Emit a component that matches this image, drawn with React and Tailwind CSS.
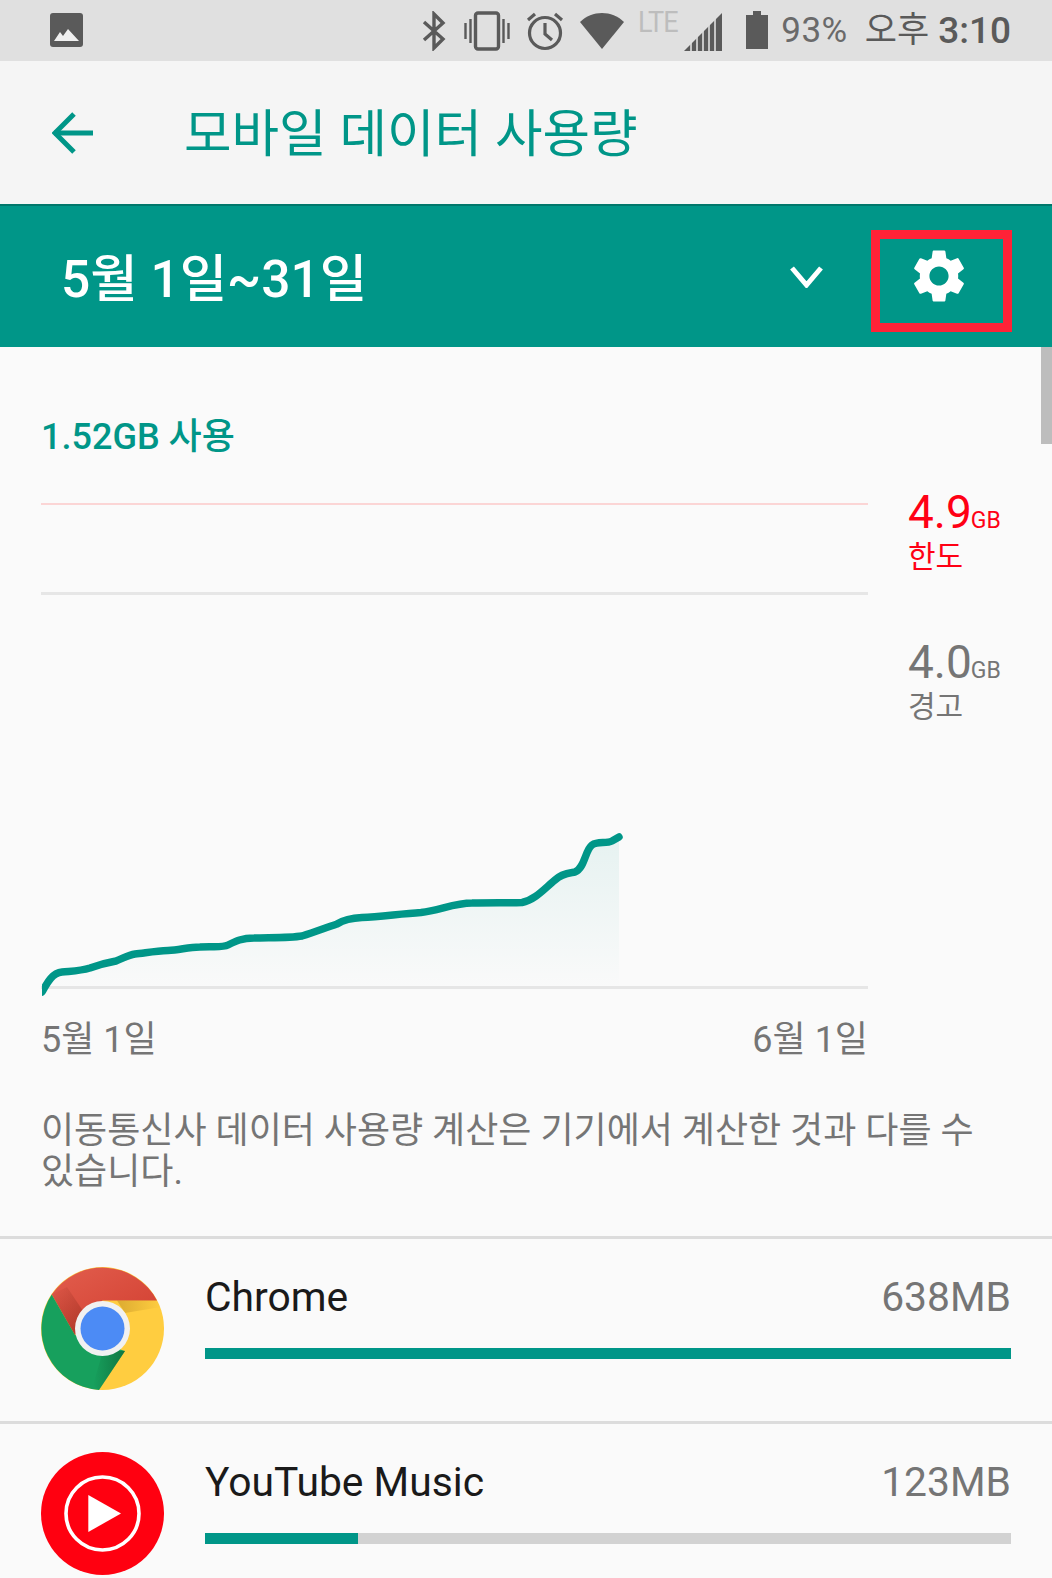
const FONT = "font-['Roboto','Noto_Sans_CJK_KR',sans-serif]";

function StatusIcons() {
  return (
    <div className="flex items-center h-full text-[#5f5f5f]">
      <svg className="w-[27px] h-[40px]" viewBox="0 0 27 40" fill="none" stroke="#5a5a5a" strokeWidth="3.4">
        <path d="M3 11 L22 28 L13 37 L13 3 L22 12 L3 29" />
      </svg>
      <svg className="w-[46px] h-[40px] ml-[16px]" viewBox="0 0 46 40" fill="none" stroke="#5a5a5a">
        <rect x="11.5" y="2" width="23" height="36" rx="2.5" strokeWidth="3.4" />
        <path d="M1.5 12v16M6.5 8v24M39.5 8v24M44.5 12v16" strokeWidth="2.4" />
      </svg>
      <svg className="w-[38px] h-[40px] ml-[16px]" viewBox="0 0 38 40" fill="none" stroke="#5a5a5a" strokeWidth="3.2">
        <circle cx="19" cy="22" r="15.5" />
        <path d="M19 12v11l7 6" />
        <path d="M2 9l7-6M36 9l-7-6" />
      </svg>
      <svg className="w-[44px] h-[36px] ml-[16px]" viewBox="0 0 44 36">
        <path d="M0 9C6 3 14 0 22 0s16 3 22 9L22 36z" fill="#5a5a5a" />
      </svg>
      <div className="relative w-[42px] h-[40px] ml-[14px] -mt-[14px]">
        <span className="absolute left-0 top-[0px] text-[30px] leading-[36px] text-[#bdbdbd] tracking-[-1px] scale-x-[0.9] origin-left">LTE</span>
      </div>
      <svg className="w-[38px] h-[38px] ml-[4px] mt-[2px]" viewBox="0 0 38 38">
        <path d="M0 38 L38 0 V38z" fill="#5a5a5a" />
        <path d="M7 38V28M13 38V22M19 38V16M25 38V10M31 38V4" stroke="#e0e0e0" strokeWidth="1.6" />
      </svg>
      <svg className="w-[22px] h-[38px] ml-[24px] mt-[-2px]" viewBox="0 0 22 38">
        <path d="M7 0h8v4h7v34H0V4h7z" fill="#5a5a5a" />
      </svg>
      <span className="ml-[13px] text-[35px] text-[#6a6a6a] leading-none tracking-[0.5px]">93%</span>
      <span className="ml-[17px] text-[35px] text-[#5a5a5a] leading-none">오후</span>
      <span className="ml-[9px] text-[37px] font-medium text-[#5a5a5a] leading-none">3:10</span>
    </div>
  );
}

function ChromeLogo() {
  return (
    <svg className="w-[123px] h-[123px] shrink-0" viewBox="0 0 123 123">
      <defs>
        <linearGradient id="shR" x1="0.1" y1="0.1" x2="0.7" y2="0.8">
          <stop offset="0" stopColor="#e05a4a" />
          <stop offset="1" stopColor="#d54536" />
        </linearGradient>
        <linearGradient id="sh1" x1="0" y1="0" x2="1" y2="1">
          <stop offset="0" stopColor="#8a2a1c" stopOpacity="0" />
          <stop offset="1" stopColor="#8a2a1c" stopOpacity="0.55" />
        </linearGradient>
        <linearGradient id="sh2" x1="1" y1="0" x2="0" y2="0">
          <stop offset="0" stopColor="#0c5a30" stopOpacity="0.6" />
          <stop offset="1" stopColor="#0c5a30" stopOpacity="0" />
        </linearGradient>
        <linearGradient id="sh3" x1="0" y1="0" x2="1" y2="0">
          <stop offset="0" stopColor="#a5761a" stopOpacity="0.55" />
          <stop offset="1" stopColor="#a5761a" stopOpacity="0" />
        </linearGradient>
      </defs>
      <circle cx="61.5" cy="61.5" r="61.5" fill="#ffcd40" />
      <path d="M10.7 27.5 A61.5 61.5 0 0 1 116 33.5 H61.5 L34 68 Z" fill="url(#shR)" />
      <path d="M10.7 27.5 A61.5 61.5 0 0 0 58 122.9 L84 84 L34 68 Z" fill="#17a05d" />
      <path d="M10.7 27.5 L34 68 L46 50 L26 20Z" fill="url(#sh1)" />
      <path d="M84 84 L58 122.9 L52 118 L62 84Z" fill="url(#sh2)" />
      <path d="M76 33.5 H116 L120 40 L84 46 Z" fill="url(#sh3)" opacity="0.7" />
      <circle cx="61.5" cy="61.5" r="27.5" fill="#f1f1f1" />
      <circle cx="61.5" cy="61.5" r="22" fill="#4c8bf5" />
    </svg>
  );
}

function YouTubeLogo() {
  return (
    <svg className="w-[123px] h-[123px] shrink-0" viewBox="0 0 123 123">
      <circle cx="61.5" cy="61.5" r="61.5" fill="#ff0010" />
      <circle cx="61.5" cy="61.5" r="36.5" fill="none" stroke="#fff" strokeWidth="3.6" />
      <path d="M47.3 43 L80 61.5 L47.3 80 Z" fill="#fff" />
    </svg>
  );
}

function AppRow({ icon, name, size, barClass }) {
  return (
    <div className="flex pl-[41px] pr-[41px] h-[185px] pt-[28px] border-t-[3px] border-t-[#dcdcdc]">
      {icon}
      <div className="ml-[41px] flex-1 min-w-0">
        <div className="flex justify-between items-center h-[60px]">
          <span className="text-[40.8px] text-[#1a1a1a] leading-none">{name}</span>
          <span className="text-[40.8px] text-[#757575] leading-none">{size}</span>
        </div>
        <div className="mt-[21px] h-[11px] bg-[#d2d2d2]">
          <div className={`h-full bg-[#009688] ${barClass}`} />
        </div>
      </div>
    </div>
  );
}

const CURVE =
  "M42 992 C47 983 52 973 62 972 C72 971 80 971 90 968 C98 965 105 963 116 961 C124 958 128 955 135 954 C145 953 155 951 168 950.5 C180 950 188 947 200 947 C212 946 222 948 228 945 C236 941 242 938 254 938 C270 937.5 290 938 302 936 C315 932 325 928 337 924 C345 919 352 918 362 917.5 C380 916.5 400 914 421 912.5 C440 910 455 903 472 903 C490 902.5 510 903 522 902.5 C535 900 545 888 555 880 C562 873 570 873 575 872 C585 868 585 850 592 845 C598 841 606 844 612 841 L619 837";

export default function App() {
  return (
    <div className={`${FONT} w-[1052px] h-[1578px] overflow-hidden bg-[#fafafa] relative`}>
      {/* status bar */}
      <div className="h-[61px] bg-[#e0e0e0] flex items-center justify-between pl-[50px] pr-[41px]">
        <svg className="w-[33px] h-[34px] mt-[-1px]" viewBox="0 0 33 34">
          <rect width="33" height="34" rx="3" fill="#5a5a5a" />
          <path d="M4 28 L10 19 L13 23 L18 16 L29 28 Z" fill="#f0f0f0" />
        </svg>
        <StatusIcons />
      </div>

      {/* title bar */}
      <div className="h-[143px] bg-[#f5f5f5] flex items-center pl-[52px]">
        <svg className="w-[42px] h-[42px] shrink-0" viewBox="0 0 42 42" fill="none" stroke="#009688" strokeWidth="5">
          <path d="M2 21 H41" />
          <path d="M22 2 L3 21 L22 40" />
        </svg>
        <span className="ml-[90px] mt-[4px] text-[51.7px] text-[#009688] leading-none">모바일 데이터 사용량</span>
      </div>

      {/* teal bar */}
      <div className="h-[143px] bg-[#009688] border-t-[2px] border-t-[#00776b] flex items-center pl-[61px] pr-[40px]">
        <span className="mt-[6px] text-[51.5px] font-medium text-white leading-none flex-1">5월 1일~31일</span>
        <svg className="w-[33px] h-[22px] mr-[48px]" viewBox="0 0 33 22" fill="none" stroke="#fff" strokeWidth="5">
          <path d="M2 2 L16.5 19 L31 2" />
        </svg>
        <div className="w-[141px] h-[102px] mt-[8px] border-[9px] border-[#ff2237] flex items-center justify-center">
          <svg className="w-[64px] h-[64px] ml-[-5px] mt-[-9px]" viewBox="0 0 24 24" fill="#fff">
            <path d="M19.14 12.94c.04-.3.06-.61.06-.94 0-.32-.02-.64-.07-.94l2.03-1.58a.49.49 0 0 0 .12-.61l-1.92-3.32a.488.488 0 0 0-.59-.22l-2.39.96c-.5-.38-1.03-.7-1.62-.94l-.36-2.54a.484.484 0 0 0-.48-.41h-3.84c-.24 0-.43.17-.47.41l-.36 2.54c-.59.24-1.13.57-1.62.94l-2.39-.96c-.22-.08-.47 0-.59.22L2.74 8.87c-.12.21-.08.47.12.61l2.03 1.58c-.05.3-.09.63-.09.94s.02.64.07.94l-2.03 1.58a.49.49 0 0 0-.12.61l1.92 3.32c.12.22.37.29.59.22l2.39-.96c.5.38 1.03.7 1.62.94l.36 2.54c.05.24.24.41.48.41h3.84c.24 0 .44-.17.47-.41l.36-2.54c.59-.24 1.13-.56 1.62-.94l2.39.96c.22.08.47 0 .59-.22l1.92-3.32c.12-.22.07-.47-.12-.61l-2.01-1.58zM12 15.6c-1.98 0-3.6-1.62-3.6-3.6s1.62-3.6 3.6-3.6 3.6 1.62 3.6 3.6-1.62 3.6-3.6 3.6z" />
          </svg>
        </div>
      </div>

      {/* scroll indicator */}
      <div className="absolute right-0 top-[347px] w-[11px] h-[97px] bg-[#bdbdbd]" />

      {/* usage */}
      <div className="pl-[41px] pt-[64px] h-[156px]">
        <div className="text-[36px] font-medium text-[#009688] leading-[52px]">1.52GB 사용</div>
      </div>

      {/* chart */}
      <div className="relative pl-[41px] h-[500px]">
        <div className="w-[827px] h-[2px] bg-[#fbd5d5]" />
        <div className="w-[827px] h-[3px] mt-[87px] bg-[#e6e6e6]" />
        <div className="w-[827px] h-[3px] mt-[391px] bg-[#e6e6e6]" />

        <svg className="absolute left-[42px] top-0 w-[598px] h-[500px]" viewBox="42 503 598 500" fill="none">
          <defs>
            <linearGradient id="areaFill" x1="0" y1="0" x2="0" y2="1">
              <stop offset="0" stopColor="#009688" stopOpacity="0.08" />
              <stop offset="1" stopColor="#009688" stopOpacity="0" />
            </linearGradient>
          </defs>
          <path d={`${CURVE} L619 985 L42 985Z`} fill="url(#areaFill)" />
          <path d={CURVE} stroke="#009688" strokeWidth="7.5" strokeLinecap="round" />
        </svg>

        <div className="absolute left-[908px] top-[-17px] text-[#ff0014]">
          <div className="flex items-baseline leading-none">
            <span className="text-[46px] leading-[52px]">4.9</span>
            <span className="text-[23px] leading-[52px] ml-[-1px]">GB</span>
          </div>
          <div className="text-[30px] leading-[34px] mt-[-7px]">한도</div>
        </div>
        <div className="absolute left-[908px] top-[133px] text-[#757575]">
          <div className="flex items-baseline leading-none">
            <span className="text-[46px] leading-[52px]">4.0</span>
            <span className="text-[23px] leading-[52px] ml-[-1px]">GB</span>
          </div>
          <div className="text-[30px] leading-[34px] mt-[-7px]">경고</div>
        </div>
      </div>

      {/* axis labels */}
      <div className="w-[827px] ml-[41px] flex justify-between text-[36px] text-[#757575] leading-[52px] mt-[11px]">
        <span>5월 1일</span>
        <span>6월 1일</span>
      </div>

      {/* note */}
      <div className="pl-[41px] pr-[41px] mt-[45px] text-[36px] leading-[41px] text-[#757575] h-[125px] break-keep">
        이동통신사 데이터 사용량 계산은 기기에서 계산한 것과 다를 수 있습니다.
      </div>

      <AppRow icon={<ChromeLogo />} name="Chrome" size="638MB" barClass="w-full" />
      <AppRow icon={<YouTubeLogo />} name="YouTube Music" size="123MB" barClass="w-[153px]" />
    </div>
  );
}
